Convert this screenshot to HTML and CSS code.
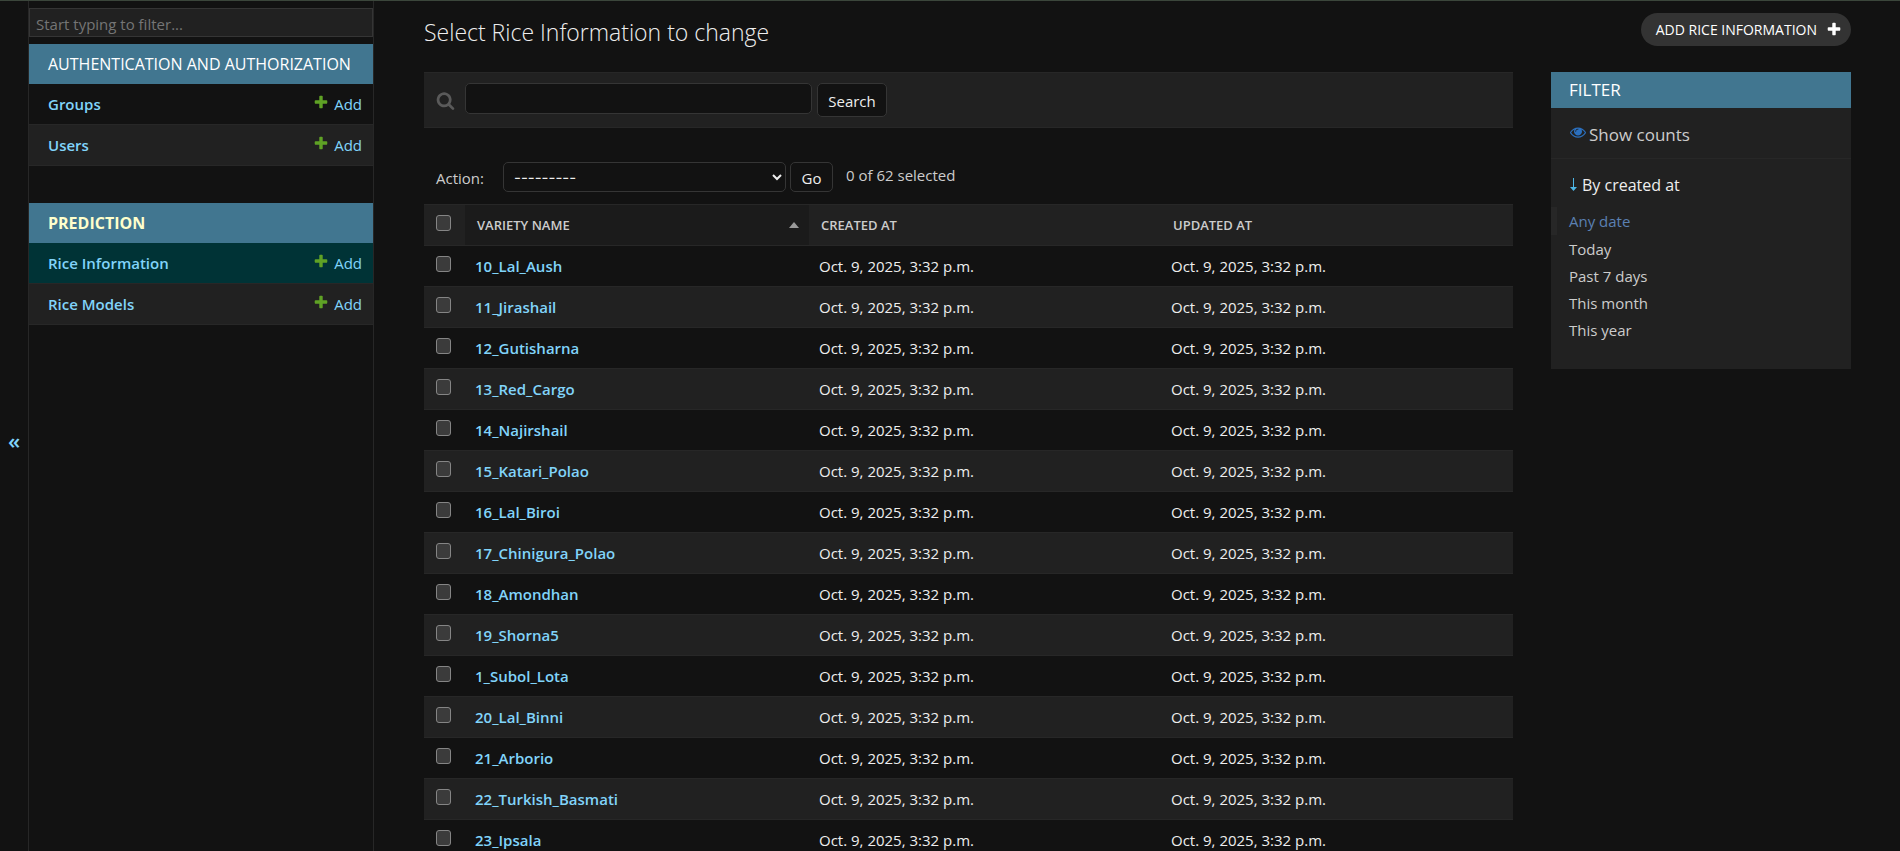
FILE: index.html
```html
<!DOCTYPE html>
<html lang="en">
<head>
<meta charset="utf-8">
<title>Select Rice Information to change</title>
<link rel="stylesheet" href="styles.css">
</head>
<body>
<svg class="sprite" aria-hidden="true">
  <symbol id="plus" viewBox="0 0 1792 1792"><path d="M1600 796v192q0 40-28 68t-68 28h-416v416q0 40-28 68t-68 28h-192q-40 0-68-28t-28-68v-416h-416q-40 0-68-28t-28-68v-192q0-40 28-68t68-28h416v-416q0-40 28-68t68-28h192q40 0 68 28t28 68v416h416q40 0 68 28t28 68z"/></symbol>
  <symbol id="lens" viewBox="0 0 1792 1792"><path d="M1216 832q0-185-131.500-316.500t-316.500-131.500-316.500 131.500-131.500 316.500 131.500 316.500 316.500 131.500 316.500-131.500 131.500-316.500zm512 832q0 52-38 90t-90 38q-54 0-90-38l-343-342q-179 124-399 124-143 0-273.500-55.500t-225-150-150-225-55.500-273.500 55.500-273.500 150-225 225-150 273.500-55.500 273.500 55.500 225 150 150 225 55.500 273.500q0 220-124 399l343 343q37 37 37 90z"/></symbol>
  <symbol id="eye" viewBox="0 0 1792 1792"><path d="M1664 960q-152-236-381-353 61 104 61 225 0 185-131.500 316.500t-316.500 131.500-316.500-131.500-131.500-316.500q0-121 61-225-229 117-381 353 133 205 333.500 326.500t434.500 121.500 434.500-121.500 333.500-326.500zm-720-384q0-20-14-34t-34-14q-125 0-214.500 89.500t-89.500 214.500q0 20 14 34t34 14 34-14 14-34q0-86 61-147t147-61q20 0 34-14t14-34zm848 384q0 34-20 69-140 230-376.500 368.500t-499.500 138.500-499.500-139-376.500-368q-20-35-20-69t20-69q140-229 376.500-368t499.500-139 499.500 139 376.500 368q20 35 20 69z"/></symbol>
</svg>
<div class="shell">
  <button class="toggle" type="button" aria-label="Toggle navigation">«</button>
  <nav class="nav" aria-label="Sidebar">
    <input class="nav-filter" type="search" placeholder="Start typing to filter..." aria-label="Filter navigation items">
    <section class="app">
      <h2 class="app-title"><a href="#">Authentication and Authorization</a></h2>
      <div class="model"><a class="model-name" href="#">Groups</a><a class="add" href="#"><svg class="add-icon"><use href="#plus"/></svg>Add</a></div>
      <div class="model alt"><a class="model-name" href="#">Users</a><a class="add" href="#"><svg class="add-icon"><use href="#plus"/></svg>Add</a></div>
    </section>
    <section class="app">
      <h2 class="app-title current"><a href="#">Prediction</a></h2>
      <div class="model selected"><a class="model-name" href="#">Rice Information</a><a class="add" href="#"><svg class="add-icon"><use href="#plus"/></svg>Add</a></div>
      <div class="model alt"><a class="model-name" href="#">Rice Models</a><a class="add" href="#"><svg class="add-icon"><use href="#plus"/></svg>Add</a></div>
    </section>
  </nav>
  <main class="main">
    <header class="head">
      <h1 class="title">Select Rice Information to change</h1>
      <a class="add-button" href="#">Add Rice Information<svg class="button-icon"><use href="#plus"/></svg></a>
    </header>
    <div class="columns">
      <div class="changelist">
        <form class="toolbar">
          <label class="lens" for="q" aria-label="Search"><svg class="lens-icon"><use href="#lens"/></svg></label>
          <input class="search" id="q" type="text">
          <button class="button search-button" type="button">Search</button>
        </form>
        <div class="actions">
          <label class="action-label" for="action">Action:</label>
          <select class="action" id="action"><option>---------</option></select>
          <button class="button go" type="button">Go</button>
          <span class="counter">0 of 62 selected</span>
        </div>
        <table class="results">
          <colgroup><col class="col-check"><col class="col-name"><col class="col-created"><col class="col-updated"></colgroup>
          <thead>
            <tr><th><input type="checkbox" aria-label="Select all"></th><th class="sorted"><div class="sort"><a href="#">Variety name</a><svg class="sort-icon" viewBox="0 0 10 6"><path d="M0 6 5 0 10 6z"/></svg></div></th><th><a href="#">Created at</a></th><th><a href="#">Updated at</a></th></tr>
          </thead>
          <tbody>
            <tr><td><input type="checkbox" aria-label="Select 10_Lal_Aush"></td><th><a href="#">10_Lal_Aush</a></th><td>Oct. 9, 2025, 3:32 p.m.</td><td>Oct. 9, 2025, 3:32 p.m.</td></tr>
            <tr><td><input type="checkbox" aria-label="Select 11_Jirashail"></td><th><a href="#">11_Jirashail</a></th><td>Oct. 9, 2025, 3:32 p.m.</td><td>Oct. 9, 2025, 3:32 p.m.</td></tr>
            <tr><td><input type="checkbox" aria-label="Select 12_Gutisharna"></td><th><a href="#">12_Gutisharna</a></th><td>Oct. 9, 2025, 3:32 p.m.</td><td>Oct. 9, 2025, 3:32 p.m.</td></tr>
            <tr><td><input type="checkbox" aria-label="Select 13_Red_Cargo"></td><th><a href="#">13_Red_Cargo</a></th><td>Oct. 9, 2025, 3:32 p.m.</td><td>Oct. 9, 2025, 3:32 p.m.</td></tr>
            <tr><td><input type="checkbox" aria-label="Select 14_Najirshail"></td><th><a href="#">14_Najirshail</a></th><td>Oct. 9, 2025, 3:32 p.m.</td><td>Oct. 9, 2025, 3:32 p.m.</td></tr>
            <tr><td><input type="checkbox" aria-label="Select 15_Katari_Polao"></td><th><a href="#">15_Katari_Polao</a></th><td>Oct. 9, 2025, 3:32 p.m.</td><td>Oct. 9, 2025, 3:32 p.m.</td></tr>
            <tr><td><input type="checkbox" aria-label="Select 16_Lal_Biroi"></td><th><a href="#">16_Lal_Biroi</a></th><td>Oct. 9, 2025, 3:32 p.m.</td><td>Oct. 9, 2025, 3:32 p.m.</td></tr>
            <tr><td><input type="checkbox" aria-label="Select 17_Chinigura_Polao"></td><th><a href="#">17_Chinigura_Polao</a></th><td>Oct. 9, 2025, 3:32 p.m.</td><td>Oct. 9, 2025, 3:32 p.m.</td></tr>
            <tr><td><input type="checkbox" aria-label="Select 18_Amondhan"></td><th><a href="#">18_Amondhan</a></th><td>Oct. 9, 2025, 3:32 p.m.</td><td>Oct. 9, 2025, 3:32 p.m.</td></tr>
            <tr><td><input type="checkbox" aria-label="Select 19_Shorna5"></td><th><a href="#">19_Shorna5</a></th><td>Oct. 9, 2025, 3:32 p.m.</td><td>Oct. 9, 2025, 3:32 p.m.</td></tr>
            <tr><td><input type="checkbox" aria-label="Select 1_Subol_Lota"></td><th><a href="#">1_Subol_Lota</a></th><td>Oct. 9, 2025, 3:32 p.m.</td><td>Oct. 9, 2025, 3:32 p.m.</td></tr>
            <tr><td><input type="checkbox" aria-label="Select 20_Lal_Binni"></td><th><a href="#">20_Lal_Binni</a></th><td>Oct. 9, 2025, 3:32 p.m.</td><td>Oct. 9, 2025, 3:32 p.m.</td></tr>
            <tr><td><input type="checkbox" aria-label="Select 21_Arborio"></td><th><a href="#">21_Arborio</a></th><td>Oct. 9, 2025, 3:32 p.m.</td><td>Oct. 9, 2025, 3:32 p.m.</td></tr>
            <tr><td><input type="checkbox" aria-label="Select 22_Turkish_Basmati"></td><th><a href="#">22_Turkish_Basmati</a></th><td>Oct. 9, 2025, 3:32 p.m.</td><td>Oct. 9, 2025, 3:32 p.m.</td></tr>
            <tr><td><input type="checkbox" aria-label="Select 23_Ipsala"></td><th><a href="#">23_Ipsala</a></th><td>Oct. 9, 2025, 3:32 p.m.</td><td>Oct. 9, 2025, 3:32 p.m.</td></tr>
          </tbody>
        </table>
      </div>
      <aside class="filter">
        <h2 class="filter-title">Filter</h2>
        <a class="counts" href="#"><svg class="eye-icon"><use href="#eye"/></svg>Show counts</a>
        <details class="facet" open>
          <summary class="facet-title"><svg class="arrow-icon" viewBox="0 0 7 14"><path d="M3 0h1v9h3L3.500 13 0 9h3z"/></svg>By created at</summary>
          <ul class="choices">
            <li class="chosen"><a href="#">Any date</a></li>
            <li><a href="#">Today</a></li>
            <li><a href="#">Past 7 days</a></li>
            <li><a href="#">This month</a></li>
            <li><a href="#">This year</a></li>
          </ul>
        </details>
      </aside>
    </div>
  </main>
</div>
</body>
</html>
```

FILE: styles.css
```css
* { box-sizing: border-box; }

body {
  margin: 0;
  background: #121212;
  color: #eeeeee;
  font-family: "Open Sans", "Noto Sans", sans-serif;
  font-size: 15px;
  line-height: 20px;
  color-scheme: dark;
}

a { color: #81d4fa; text-decoration: none; }
h1, h2, ul { margin: 0; padding: 0; }
input, button, select { font: inherit; color: inherit; }

.sprite { display: none; }

.shell {
  display: flex;
  height: 100vh;
  border-top: 1px solid #3b463b;
}

/* Sidebar */
.toggle {
  flex: none;
  width: 29px;
  padding: 28px 0 0;
  border: 0;
  border-right: 1px solid #272727;
  background: #121212;
  color: #81d4fa;
  font-size: 22px;
  font-weight: 600;
}

.nav {
  flex: none;
  width: 345px;
  padding-top: 7px;
  border-right: 1px solid #272727;
}

.nav-filter {
  display: block;
  width: 100%;
  height: 29px;
  margin-bottom: 7px;
  padding: 2px 6px 0;
  border: 1px solid #353535;
  border-radius: 0;
  background: #212121;
  appearance: none;
  outline: 0;
}
.nav-filter::placeholder { color: #757575; }

.app { margin-bottom: 37px; }

.app-title {
  height: 40px;
  padding: 0 19px;
  background: #417690;
  font-size: 16px;
  font-weight: 400;
  line-height: 40px;
  text-transform: uppercase;
}
.app-title a { color: #ffffff; }
.app-title.current { font-weight: 700; }
.app-title.current a { color: #ffffcc; }

.model {
  display: flex;
  justify-content: space-between;
  height: 41px;
  padding: 10px 11px 0 19px;
  border-bottom: 1px solid #272727;
}
.model.alt { background: #212121; }
.model.selected { background: #003336; }
.model-name { font-weight: 600; }
.add { display: flex; gap: 5px; }
.add-icon { width: 16px; height: 16px; fill: #5fa225; }

/* Content */
.main {
  flex: 1;
  min-width: 0;
  padding: 12px 49px 0 50px;
  overflow: auto;
  scrollbar-width: none;
}

.head {
  display: flex;
  justify-content: space-between;
  height: 59px;
}

.title {
  font-size: 23px;
  font-weight: 300;
  line-height: 38px;
}

.add-button {
  display: flex;
  align-items: center;
  gap: 9px;
  height: 33px;
  padding: 0 9px 0 15px;
  border-radius: 17px;
  background: #333333;
  color: #ffffff;
  font-size: 14px;
  font-weight: 500;
  text-transform: uppercase;
}
.button-icon { width: 16px; height: 16px; margin-bottom: 2px; fill: #ffffff; }

.columns { display: flex; align-items: flex-start; gap: 38px; }
.changelist { flex: 1; min-width: 0; }

.toolbar {
  display: flex;
  height: 56px;
  padding: 10px 12px;
  border: 1px solid #272727;
  border-width: 1px 0;
  background: #212121;
}
.lens { display: flex; width: 29px; padding-top: 8px; }
.lens-icon { width: 19px; height: 19px; fill: #5a5a5a; }

.search {
  width: 347px;
  height: 31px;
  margin-right: 5px;
  border: 1px solid #353535;
  border-radius: 5px;
  background: #121212;
}

.button {
  padding: 1px 0 0;
  border: 1px solid #353535;
  border-radius: 5px;
  background: #121212;
}
.search-button { width: 70px; height: 34px; }

.actions {
  display: flex;
  height: 76px;
  padding: 34px 12px 0;
}
.action-label { width: 67px; padding-top: 6px; color: #cccccc; }
.action {
  width: 283px;
  height: 30px;
  margin-right: 4px;
  padding: 0 0 0 6px;
  border: 1px solid #353535;
  border-radius: 5px;
  background: #121212;
  font-family: Inter, sans-serif;
}
.go { width: 43px; height: 30px; margin-right: 13px; }
.counter { padding-top: 3px; color: #cccccc; }

.results {
  width: 100%;
  border-collapse: separate;
  border-spacing: 0;
  table-layout: fixed;
}
.col-check { width: 41px; }
.col-name { width: 344px; }
.col-created { width: 352px; }

.results th, .results td {
  height: 41px;
  padding: 0 10px;
  border-bottom: 1px solid #272727;
  text-align: left;
  vertical-align: middle;
}
.results th { font-weight: 600; }
.results thead th {
  height: 42px;
  padding: 0 12px;
  border-top: 1px solid #272727;
  background: #212121;
  font-size: 13px;
  text-transform: uppercase;
}
.results thead th.sorted { padding-right: 10px; background: #1b1b1b; }
.results thead a { color: #cccccc; }
.results tbody tr:nth-child(even) { background: #212121; }
.results tr > :first-child { padding: 0 12px 5px; }
.results thead tr > :first-child { padding: 0 12px 4px; }

.sort { display: flex; align-items: center; justify-content: space-between; }
.sort-icon { width: 10px; height: 6px; fill: #999999; }

input[type="checkbox"] {
  display: block;
  width: 15px;
  height: 16px;
  margin: 0;
  border: 1px solid #858585;
  border-radius: 3px;
  background: #3b3b3b;
  appearance: none;
}

/* Filter panel */
.filter {
  flex: none;
  width: 300px;
  padding-bottom: 26px;
  background: #212121;
}
.filter-title {
  height: 36px;
  padding: 0 18px;
  background: #417690;
  color: #ffffff;
  font-size: 17px;
  font-weight: 400;
  line-height: 36px;
  text-transform: uppercase;
}
.counts {
  display: flex;
  gap: 3px;
  height: 51px;
  padding: 16px 19px 0;
  border-bottom: 1px solid #272727;
  color: #cccccc;
  font-size: 17px;
  line-height: 22px;
}
.eye-icon { width: 16px; height: 16px; fill: #2b70bf; }
.facet-title {
  display: flex;
  gap: 5px;
  height: 48px;
  padding: 15px 19px 0;
  font-size: 16px;
  line-height: 22px;
}
.arrow-icon { width: 7px; height: 14px; margin-top: 4px; fill: #4db6e6; }
.choices { list-style: none; }
.choices li { padding: 4px 0 3px 18px; }
.choices a { color: #cccccc; }
.choices li.chosen {
  padding: 4px 0 4px 12px;
  border-left: 6px solid #272727;
}
.choices .chosen a { color: #5b80b2; }
```
